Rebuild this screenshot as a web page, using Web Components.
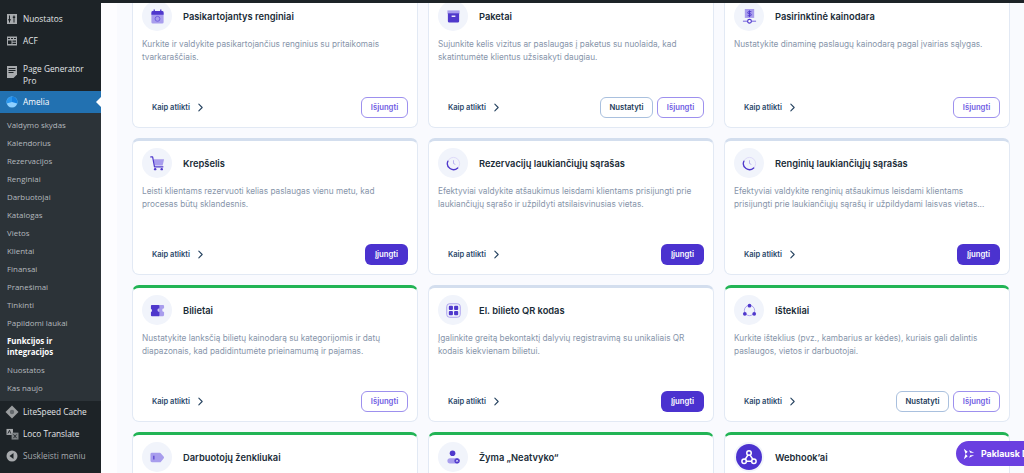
<!DOCTYPE html>
<html lang="lt">
<head>
<meta charset="utf-8">
<title>Funkcijos ir integracijos</title>
<style>
  html, body { margin: 0; height: 100%; overflow: hidden; background: #fff; }
  svg { display: block; }
</style>
</head>
<body>
<admin-page>
  <admin-sidebar slot="sidebar">
    <menu-item label="Nuostatos">
      <svg slot="icon" viewBox="0 0 12 12" width="12" height="12"><path fill="#a7aaad" d="M1 1h10v10H1z"/><path stroke="#1d2327" stroke-width="1" d="M3.500 2.500v7M8 2.500v7"/><path fill="#1d2327" d="M2.300 6h2.400v1.500H2.300zM6.800 3.500h2.400V5H6.800z"/></svg>
    </menu-item>
    <menu-item label="ACF">
      <svg slot="icon" viewBox="0 0 12 12" width="12" height="12"><path fill="#a7aaad" d="M1 1.500h10v9H1z"/><path fill="#1d2327" d="M2 3h2v1H2zM5 3h2v1H5zM8 3h2v1H8zM2 5.500h3.500V9H2zM6.500 5.500H10v1.300H6.500zM6.500 7.700H10V9H6.500z"/></svg>
    </menu-item>
    <menu-item label="Page Generator Pro" class="sep">
      <svg slot="icon" viewBox="0 0 12 14" width="12" height="14"><path fill="#a7aaad" d="M1 1h10v8.500L7.500 13H1z"/><path stroke="#1d2327" stroke-width="1" d="M2.500 3.500h7M2.500 5.500h7M2.500 7.500h5"/></svg>
    </menu-item>
    <menu-item label="Amelia" active>
      <svg slot="icon" viewBox="0 0 12 12" width="12" height="12"><circle cx="6" cy="6" r="5.500" fill="#8fd0ff"/><path fill="#2a96ee" d="M6 .5A5.500 5.500 0 0 0 .7 7.500L6 6z"/><path fill="#1480e0" d="M6 .5a5.500 5.500 0 0 1 5.300 7L6 6z"/></svg>
    </menu-item>
    <sub-menu>
      <sub-item>Valdymo skydas</sub-item>
      <sub-item>Kalendorius</sub-item>
      <sub-item>Rezervacijos</sub-item>
      <sub-item>Renginiai</sub-item>
      <sub-item>Darbuotojai</sub-item>
      <sub-item>Katalogas</sub-item>
      <sub-item>Vietos</sub-item>
      <sub-item>Klientai</sub-item>
      <sub-item>Finansai</sub-item>
      <sub-item>Pranešimai</sub-item>
      <sub-item>Tinkinti</sub-item>
      <sub-item>Papildomi laukai</sub-item>
      <sub-item current>Funkcijos ir integracijos</sub-item>
      <sub-item>Nuostatos</sub-item>
      <sub-item>Kas naujo</sub-item>
    </sub-menu>
    <menu-item label="LiteSpeed Cache">
      <svg slot="icon" viewBox="0 0 14 14" width="14" height="14"><path fill="#9a9d9f" d="M7 .5 13.500 7 7 13.500.5 7z"/><circle cx="7" cy="7" r="2.200" fill="#63686c"/></svg>
    </menu-item>
    <menu-item label="Loco Translate">
      <svg slot="icon" viewBox="0 0 14 13" width="13" height="12"><path fill="#a7aaad" d="M.5 1h7v6.500h-7z"/><path fill="#7f8487" d="M6 5h7.500v7.500H6z"/><path stroke="#1d2327" stroke-width="1" fill="none" d="M2 6l1.800-3.600L5 6M8 7l3.500 4M11.500 7 8 11"/></svg>
    </menu-item>
    <menu-item label="Suskleisti meniu" dim>
      <svg slot="icon" viewBox="0 0 12 12" width="12" height="12"><circle cx="6" cy="6" r="5.500" fill="#a7aaad"/><path fill="#1d2327" d="M7.500 3v6L3.500 6z"/></svg>
    </menu-item>
  </admin-sidebar>

  <feature-card heading="Pasikartojantys renginiai" state="enabled">
    <svg slot="icon" viewBox="0 0 16 16"><path fill="#a89ded" d="M1.500 4h13v10a1.500 1.500 0 0 1-1.500 1.500H3A1.500 1.500 0 0 1 1.500 14z"/><path fill="#4f38cc" d="M3 2h10a1.500 1.500 0 0 1 1.500 1.500V6h-13V3.500A1.500 1.500 0 0 1 3 2z"/><path stroke="#4f38cc" stroke-width="1.400" d="M4.500.5v3M11.500.5v3"/><circle cx="8" cy="10.500" r="2.600" fill="none" stroke="#6f5cdc" stroke-width="1"/></svg>
    Kurkite ir valdykite pasikartojančius renginius su pritaikomais tvarkaraščiais.
  </feature-card>
  <feature-card heading="Paketai" state="enabled" setup>
    <svg slot="icon" viewBox="0 0 16 16"><path fill="#a89ded" d="M1.500 1.500h13V5h-13z"/><path fill="#4f38cc" d="M2 4.500h12V13a1.500 1.500 0 0 1-1.500 1.500h-9A1.500 1.500 0 0 1 2 13z"/><path fill="#fff" d="M6 7h4v1.400H6z"/></svg>
    Sujunkite kelis vizitus ar paslaugas į paketus su nuolaida, kad skatintumėte klientus užsisakyti daugiau.
  </feature-card>
  <feature-card heading="Pasirinktinė kainodara" state="enabled">
    <svg slot="icon" viewBox="0 0 16 16"><path fill="#a89ded" d="M3 0h10v9.500H3z"/><path fill="none" stroke="#4f38cc" stroke-width="1" d="M10 2.800H7.200a1 1 0 0 0 0 2.200h1.600a1 1 0 0 1 0 2.200H6M8 1.500v7"/><path stroke="#6f5cdc" stroke-width="1" d="M1 13h14"/><circle cx="8" cy="13" r="2" fill="#fff" stroke="#4f38cc" stroke-width="1.200"/></svg>
    Nustatykite dinaminę paslaugų kainodarą pagal įvairias sąlygas.
  </feature-card>

  <feature-card heading="Krepšelis" state="disabled">
    <svg slot="icon" viewBox="0 0 16 16"><path fill="#a89ded" d="M4 3.500h11l-1.500 6.500H4.800z"/><path fill="none" stroke="#4f38cc" stroke-width="1.300" stroke-linecap="round" stroke-linejoin="round" d="M.8 1h2l2 10.500h9"/><circle cx="5.500" cy="14" r="1.300" fill="#4f38cc"/><circle cx="12.500" cy="14" r="1.300" fill="#4f38cc"/></svg>
    Leisti klientams rezervuoti kelias paslaugas vienu metu, kad procesas būtų sklandesnis.
  </feature-card>
  <feature-card heading="Rezervacijų laukiančiųjų sąrašas" state="disabled">
    <svg slot="icon" viewBox="0 0 16 16"><circle cx="8" cy="8" r="6.500" fill="none" stroke="#dcd8f7" stroke-width="1"/><path fill="none" stroke="#4f38cc" stroke-width="1.400" stroke-linecap="round" d="M2 5.500A6.500 6.500 0 0 0 12.500 12.700"/><path fill="none" stroke="#a89ded" stroke-width=".8" stroke-linecap="round" d="M8 5v3l1.600.8"/></svg>
    Efektyviai valdykite atšaukimus leisdami klientams prisijungti prie laukiančiųjų sąrašo ir užpildyti atsilaisvinusias vietas.
  </feature-card>
  <feature-card heading="Renginių laukiančiųjų sąrašas" state="disabled">
    <svg slot="icon" viewBox="0 0 16 16"><circle cx="8" cy="8" r="6.500" fill="none" stroke="#dcd8f7" stroke-width="1"/><path fill="none" stroke="#4f38cc" stroke-width="1.400" stroke-linecap="round" d="M2 5.500A6.500 6.500 0 0 0 12.500 12.700"/><path fill="none" stroke="#a89ded" stroke-width=".8" stroke-linecap="round" d="M8 5v3l1.600.8"/></svg>
    Efektyviai valdykite renginių atšaukimus leisdami klientams prisijungti prie laukiančiųjų sąrašų ir užpildydami laisvas vietas...
  </feature-card>

  <feature-card heading="Bilietai" mode="on" state="enabled">
    <svg slot="icon" viewBox="0 0 16 16"><path fill="#a89ded" d="M9 2h5a1.500 1.500 0 0 1 1 1v2.500a2 2 0 0 0 0 4V13a1.500 1.500 0 0 1-1 1H9z"/><path fill="#4f38cc" d="M2 2h7a1 1 0 0 1 1 1v2.500a2 2 0 0 0 0 4V13a1 1 0 0 1-1 1H2a1 1 0 0 1-1-1V9.800a2 2 0 0 0 0-3.600V3a1 1 0 0 1 1-1z"/></svg>
    Nustatykite lanksčią bilietų kainodarą su kategorijomis ir datų diapazonais, kad padidintumėte prieinamumą ir pajamas.
  </feature-card>
  <feature-card heading="El. bilieto QR kodas" state="disabled">
    <svg slot="icon" viewBox="0 0 16 16"><rect x=".8" y=".8" width="14.400" height="14.400" rx="3" fill="none" stroke="#a89ded" stroke-width="1"/><rect x="3" y="3" width="4.400" height="4.400" rx="1" fill="#4f38cc"/><rect x="8.600" y="3" width="4.400" height="4.400" rx="1" fill="#4f38cc"/><rect x="3" y="8.600" width="4.400" height="4.400" rx="1" fill="#4f38cc"/><rect x="8.600" y="8.600" width="4.400" height="4.400" rx="1" fill="#4f38cc"/></svg>
    Įgalinkite greitą bekontaktį dalyvių registravimą su unikaliais QR kodais kiekvienam bilietui.
  </feature-card>
  <feature-card heading="Ištekliai" mode="on" state="enabled" setup>
    <svg slot="icon" viewBox="0 0 16 16"><circle cx="8" cy="8" r="5.500" fill="none" stroke="#a89ded" stroke-width="1"/><circle cx="8" cy="2.800" r="2" fill="#4f38cc"/><circle cx="3" cy="11.500" r="2" fill="#4f38cc"/><circle cx="13" cy="11.500" r="2" fill="#4f38cc"/></svg>
    Kurkite išteklius (pvz., kambarius ar kėdes), kuriais gali dalintis paslaugos, vietos ir darbuotojai.
  </feature-card>

  <!-- last row runs off the bottom of the window: only the heads are visible -->
  <feature-card heading="Darbuotojų ženkliukai" mode="on" brief>
    <svg slot="icon" viewBox="0 0 16 16"><path fill="#a89ded" d="M2 3h8.500a1.500 1.500 0 0 1 1.200.6l3 3.600a1.300 1.300 0 0 1 0 1.600l-3 3.600a1.500 1.500 0 0 1-1.200.6H2a1.500 1.500 0 0 1-1.500-1.500v-7A1.500 1.500 0 0 1 2 3z"/><path fill="#4f38cc" d="M3.500 6h1.200v4H3.500z"/></svg>
  </feature-card>
  <feature-card heading="Žyma „Neatvyko“" mode="on" brief>
    <svg slot="icon" viewBox="0 0 16 16"><circle cx="7" cy="3.500" r="3" fill="#4f38cc"/><rect x="1.500" y="8.800" width="13" height="5.500" rx="2.750" fill="#a89ded"/><circle cx="11.800" cy="11.500" r="2.800" fill="#4f38cc"/><path stroke="#fff" stroke-width=".8" d="M10.800 10.500l2 2M12.800 10.500l-2 2"/></svg>
  </feature-card>
  <feature-card heading="Webhook’ai" mode="on" brief solid>
    <svg slot="icon" viewBox="0 0 24 24" fill="none" stroke="#fff" stroke-width="2" stroke-linecap="round"><circle cx="12" cy="6.500" r="3"/><circle cx="5.500" cy="17.500" r="3"/><circle cx="18.500" cy="17.500" r="3"/><path d="M10.500 9.500 7 15M13.500 9.500 17 15M8.500 17.500h7"/></svg>
  </feature-card>

  <ask-button slot="overlay">Paklausk DI</ask-button>
</admin-page>

<script>
// admin shell: top bar, sidebar and the scrolled content column
class AdminPage extends HTMLElement {
  constructor() {
    super();
    this.attachShadow({ mode: 'open' });
    this.shadowRoot.innerHTML = `
      <style>
        :host { display: flex; flex-direction: column; height: 473px; overflow: hidden; position: relative; background: #fff; }
        .topbar { height: 3px; flex: none; background: #1d2327; }
        .body { flex: 1; display: flex; min-height: 0; }
        .side { flex: none; width: 101px; }
        .gutter { flex: none; width: 16px; background: #fdfdff; }
        .content { flex: 1; min-width: 0; overflow: hidden; padding-left: 15px; background: #f9fafe; }
        .grid { display: grid; grid-template-columns: repeat(3, 286px); gap: 10px; margin-top: -12px; }
      </style>
      <div class="topbar"></div>
      <div class="body">
        <div class="side"><slot name="sidebar"></slot></div>
        <div class="gutter"></div>
        <div class="content"><div class="grid"><slot></slot></div></div>
      </div>
      <slot name="overlay"></slot>
    `;
  }
}

class AdminSidebar extends HTMLElement {
  constructor() {
    super();
    this.attachShadow({ mode: 'open' });
    this.shadowRoot.innerHTML = `
      <style>
        :host { display: block; box-sizing: border-box; height: 100%; padding-top: 5px; background: #1d2327;
          font-family: "Open Sans", "Noto Sans", sans-serif; font-size: 8.300px; }
      </style>
      <slot></slot>
    `;
  }
}

class MenuItem extends HTMLElement {
  constructor() {
    super();
    this.attachShadow({ mode: 'open' });
    const label = this.getAttribute('label') || '';
    this.shadowRoot.innerHTML = `
      <style>
        :host { display: flex; align-items: center; position: relative; min-height: 22px; color: #e3e6e8; }
        :host(.sep) { margin-top: 6px; min-height: 33px; }
        :host([active]) { background: #2271b1; color: #fff; }
        :host([dim]) { color: #a7aaad; }
        .icon { flex: none; width: 23px; display: flex; justify-content: center; padding-left: 1px; box-sizing: border-box; }
        :host(.sep) .icon { align-self: flex-start; padding-top: 7px; }
        .label { line-height: 11.400px; padding-right: 8px; }
        :host([active])::after { content: ""; position: absolute; right: 0; top: 50%; margin-top: -5px;
          border: 5px solid transparent; border-right-color: #fff; border-left-width: 0; }
      </style>
      <span class="icon"><slot name="icon"></slot></span>
      <span class="label">${label}</span>
    `;
  }
}

class SubMenu extends HTMLElement {
  constructor() {
    super();
    this.attachShadow({ mode: 'open' });
    this.shadowRoot.innerHTML = `
      <style>:host { display: block; padding: 3px 0 3.500px; background: #2c3338; }</style>
      <slot></slot>
    `;
  }
}

class SubItem extends HTMLElement {
  constructor() {
    super();
    this.attachShadow({ mode: 'open' });
    this.shadowRoot.innerHTML = `
      <style>
        :host { display: block; padding: 3.500px 10px 3.500px 7px; line-height: 11px; font-size: 7.900px; color: #b4b9be; }
        :host([current]) { color: #fff; font-weight: 700; }
      </style>
      <slot></slot>
    `;
  }
}

// one feature tile; mode="on" makes the top stripe green, state sets the main button
class FeatureCard extends HTMLElement {
  constructor() {
    super();
    this.attachShadow({ mode: 'open' });
    const heading = this.getAttribute('heading') || '';
    const enabled = this.getAttribute('state') === 'enabled';
    const body = `
      <p><slot></slot></p>
      <div class="foot">
        <span class="how">Kaip atlikti
          <svg viewBox="0 0 6 10" width="5" height="9" fill="none" stroke="#24415f" stroke-width="1.300" stroke-linecap="round" stroke-linejoin="round"><path d="M1 1l4 4-4 4"/></svg>
        </span>
        ${this.hasAttribute('setup') ? '<span class="btn setup">Nustatyti</span>' : ''}
        ${enabled ? '<span class="btn outline">Išjungti</span>' : '<span class="btn primary">Įjungti</span>'}
      </div>`;
    this.shadowRoot.innerHTML = `
      <style>
        :host { display: flex; flex-direction: column; box-sizing: border-box; height: 137px;
          padding: 7px 9px 9px; background: #fff; border: 1px solid #e2e9f4; border-top: 3px solid #d3deee;
          border-radius: 7px; font-family: Inter, "Noto Sans", sans-serif; }
        :host([mode="on"]) { border-top-color: #22b455; }
        .head { display: flex; align-items: center; gap: 11px; }
        .badge { flex: none; width: 30px; height: 30px; border-radius: 50%; background: #f1f4fb;
          display: flex; align-items: center; justify-content: center; }
        ::slotted(svg) { width: 15px; height: 15px; }
        :host([solid]) .inner { width: 26px; height: 26px; border-radius: 50%; background: #4b32cf;
          display: flex; align-items: center; justify-content: center; }
        :host([solid]) ::slotted(svg) { width: 18px; height: 18px; }
        h3 { margin: 1px 0 0; font-size: 9.300px; line-height: 14px; font-weight: 600; color: #1a2c37; }
        p { margin: 7px 0 0; font-size: 8.250px; line-height: 12.500px; color: #8795aa; flex: 1; }
        .foot { display: flex; align-items: center; gap: 4px; }
        .how { display: flex; align-items: center; gap: 8px; margin-right: auto; padding-left: 10px;
          font-size: 7.500px; font-weight: 600; color: #2a486a; }
        .btn { box-sizing: border-box; height: 21px; display: flex; align-items: center; justify-content: center;
          border-radius: 6px; font-size: 7.700px; font-weight: 600; }
        .outline { width: 47px; border: 1px solid #9d90ee; color: #6f5ce3; background: #fff; }
        .setup { width: 53px; border: 1px solid #a9c0de; color: #1c3a5a; background: #fff; }
        .primary { width: 43px; background: #4b32cf; color: #fff; }
      </style>
      <div class="head">
        <span class="badge"><span class="inner"><slot name="icon"></slot></span></span>
        <h3>${heading}</h3>
      </div>
      ${this.hasAttribute('brief') ? '' : body}
    `;
  }
}

class AskButton extends HTMLElement {
  constructor() {
    super();
    this.attachShadow({ mode: 'open' });
    this.shadowRoot.innerHTML = `
      <style>
        :host { position: absolute; left: 956px; top: 441px; height: 25px; width: 110px; display: flex; align-items: center;
          gap: 6px; padding-left: 7px; box-sizing: border-box; border-radius: 12.500px; background: #6a3fe0; color: #fff;
          font: 700 8.800px Inter, "Noto Sans", sans-serif; white-space: nowrap; }
      </style>
      <svg viewBox="0 0 14 14" width="12" height="12" fill="#fff"><path d="M1 1l4.500 3.500L3 7l2.500 2.500L1 13l2-6z"/><path d="M7 2.500 13 5.500H8.500zM7 11.500l6-3H8.500z"/></svg>
      <slot></slot>
    `;
  }
}

customElements.define('admin-page', AdminPage);
customElements.define('admin-sidebar', AdminSidebar);
customElements.define('menu-item', MenuItem);
customElements.define('sub-menu', SubMenu);
customElements.define('sub-item', SubItem);
customElements.define('feature-card', FeatureCard);
customElements.define('ask-button', AskButton);
</script>
</body>
</html>
